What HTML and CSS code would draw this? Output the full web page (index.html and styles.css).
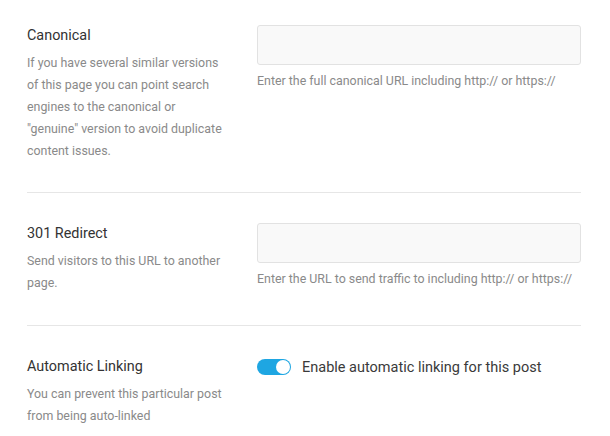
FILE: index.html
```html
<!DOCTYPE html>
<html>
<head>
<meta charset="utf-8">
<link rel="stylesheet" href="styles.css">
</head>
<body>
<div class="settings">
  <div class="row">
    <div class="info">
      <div class="title">Canonical</div>
      <div class="desc">If you have several similar versions of this page you can point search engines to the canonical or "genuine" version to avoid duplicate content issues.</div>
    </div>
    <div class="field">
      <input class="text-input" type="text">
      <div class="help">Enter the full canonical URL including http:// or https://</div>
    </div>
  </div>
  <div class="row">
    <div class="info">
      <div class="title">301 Redirect</div>
      <div class="desc">Send visitors to this URL to another page.</div>
    </div>
    <div class="field">
      <input class="text-input" type="text">
      <div class="help">Enter the URL to send traffic to including http:// or https://</div>
    </div>
  </div>
  <div class="row last">
    <div class="info">
      <div class="title">Automatic Linking</div>
      <div class="desc">You can prevent this particular post from being auto-linked</div>
    </div>
    <div class="field">
      <label class="toggle-row">
        <span class="toggle"><span class="knob"></span></span>
        <span class="toggle-label">Enable automatic linking for this post</span>
      </label>
    </div>
  </div>
</div>
</body>
</html>
```

FILE: styles.css
```css
html, body {
  margin: 0;
  padding: 0;
  background: #ffffff;
}
body {
  font-family: Roboto, "Liberation Sans", sans-serif;
  color: #333;
}
.settings {
  width: 554px;
  margin-left: 27px;
}
.row {
  display: flex;
  gap: 30px;
  padding: 30px 0 31px;
  border-bottom: 1px solid #e6e6e6;
}
.row:first-child {
  padding-top: 25px;
  padding-bottom: 30px;
}
.row.last {
  border-bottom: none;
  padding-bottom: 0;
}
.info {
  width: 200px;
  flex: none;
}
.title {
  font-size: 14.4px;
  line-height: 22px;
  color: #333;
  margin-bottom: 5px;
}
.desc {
  font-size: 12.4px;
  line-height: 22px;
  color: #8a8a8a;
}
.field {
  flex: 1;
  min-width: 0;
}
.text-input {
  display: block;
  box-sizing: border-box;
  width: 100%;
  height: 40px;
  margin: 0;
  border: 1px solid #e2e2e2;
  border-radius: 3px;
  background: #f9f9f9;
  outline: none;
}
.help {
  margin-top: 5px;
  font-size: 12.4px;
  line-height: 22px;
  color: #8a8a8a;
}
.toggle-row {
  display: flex;
  align-items: center;
  gap: 11px;
  height: 22px;
}
.toggle {
  position: relative;
  width: 34px;
  height: 16px;
  border-radius: 8px;
  background: #1ea6e2;
  flex: none;
}
.knob {
  position: absolute;
  right: 1px;
  top: 1px;
  width: 14px;
  height: 14px;
  border-radius: 50%;
  background: #fff;
}
.toggle-label {
  font-size: 14.5px;
  color: #3a3a3a;
}
```
